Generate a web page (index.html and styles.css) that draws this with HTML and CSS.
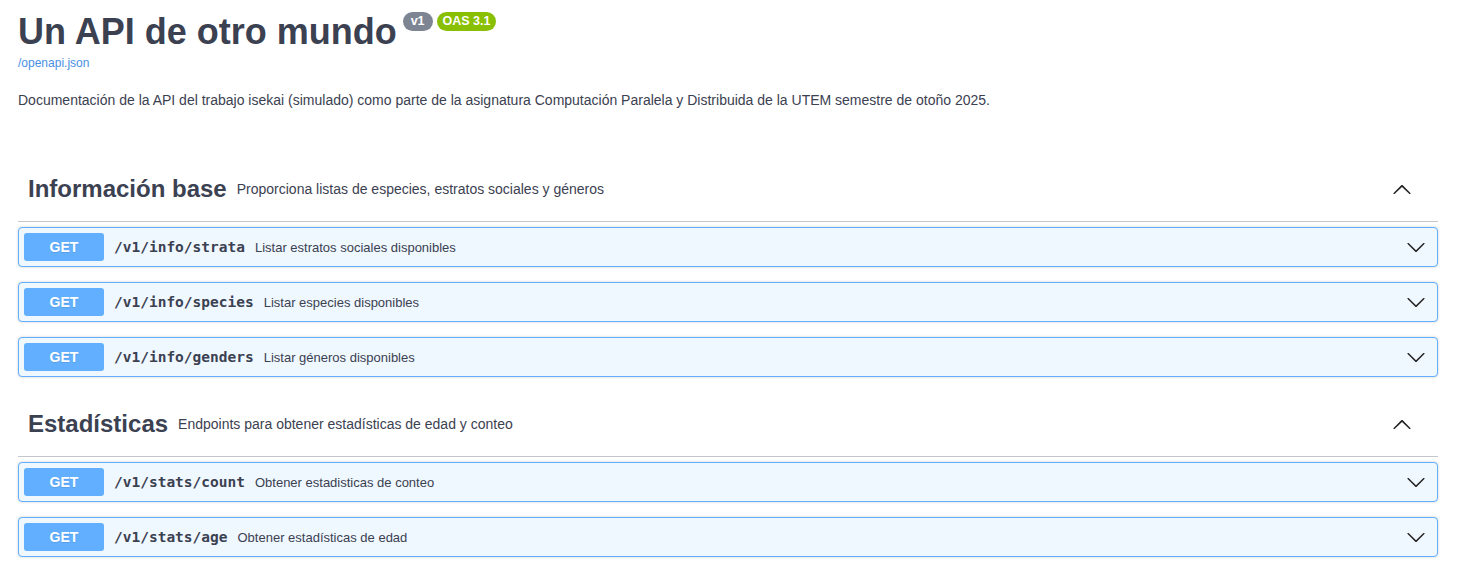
FILE: index.html
```html
<!DOCTYPE html>
<html lang="es">
<head>
<meta charset="utf-8">
<title>Un API de otro mundo</title>
<link rel="stylesheet" href="styles.css">
</head>
<body>
<div class="wrapper">
  <div class="info">
    <h2 class="title">Un API de otro mundo<span class="badge badge-version">v1</span><span class="badge badge-oas">OAS 3.1</span></h2>
    <a class="spec-link" href="#">/openapi.json</a>
    <p class="description">Documentación de la API del trabajo isekai (simulado) como parte de la asignatura Computación Paralela y Distribuida de la UTEM semestre de otoño 2025.</p>
  </div>

  <section class="tag-section">
    <div class="tag-header">
      <h3 class="tag-name">Información base</h3>
      <span class="tag-desc">Proporciona listas de especies, estratos sociales y géneros</span>
      <svg class="tag-arrow" width="20" height="20" viewBox="0 0 20 20"><path d="M17.418 14.908c.272.268.709.268.979 0s.271-.701 0-.969l-7.908-7.830c-.27-.268-.707-.268-.979 0l-7.908 7.830c-.27.268-.27.701 0 .969.271.268.709.268.979 0L10 7.993l7.418 6.915z"/></svg>
    </div>
    <div class="opblock">
      <span class="method">GET</span>
      <span class="path">/v1/info/strata</span>
      <span class="op-desc">Listar estratos sociales disponibles</span>
      <svg class="op-arrow" width="20" height="20" viewBox="0 0 20 20"><path d="M17.418 6.109c.272-.268.709-.268.979 0s.271.701 0 .969l-7.908 7.83c-.27.268-.707.268-.979 0l-7.908-7.83c-.27-.268-.27-.701 0-.969.271-.268.709-.268.979 0L10 13.25l7.418-7.141z"/></svg>
    </div>
    <div class="opblock">
      <span class="method">GET</span>
      <span class="path">/v1/info/species</span>
      <span class="op-desc">Listar especies disponibles</span>
      <svg class="op-arrow" width="20" height="20" viewBox="0 0 20 20"><path d="M17.418 6.109c.272-.268.709-.268.979 0s.271.701 0 .969l-7.908 7.83c-.27.268-.707.268-.979 0l-7.908-7.83c-.27-.268-.27-.701 0-.969.271-.268.709-.268.979 0L10 13.25l7.418-7.141z"/></svg>
    </div>
    <div class="opblock">
      <span class="method">GET</span>
      <span class="path">/v1/info/genders</span>
      <span class="op-desc">Listar géneros disponibles</span>
      <svg class="op-arrow" width="20" height="20" viewBox="0 0 20 20"><path d="M17.418 6.109c.272-.268.709-.268.979 0s.271.701 0 .969l-7.908 7.83c-.27.268-.707.268-.979 0l-7.908-7.83c-.27-.268-.27-.701 0-.969.271-.268.709-.268.979 0L10 13.25l7.418-7.141z"/></svg>
    </div>
  </section>

  <section class="tag-section">
    <div class="tag-header">
      <h3 class="tag-name">Estadísticas</h3>
      <span class="tag-desc">Endpoints para obtener estadísticas de edad y conteo</span>
      <svg class="tag-arrow" width="20" height="20" viewBox="0 0 20 20"><path d="M17.418 14.908c.272.268.709.268.979 0s.271-.701 0-.969l-7.908-7.830c-.27-.268-.707-.268-.979 0l-7.908 7.830c-.27.268-.27.701 0 .969.271.268.709.268.979 0L10 7.993l7.418 6.915z"/></svg>
    </div>
    <div class="opblock">
      <span class="method">GET</span>
      <span class="path">/v1/stats/count</span>
      <span class="op-desc">Obtener estadisticas de conteo</span>
      <svg class="op-arrow" width="20" height="20" viewBox="0 0 20 20"><path d="M17.418 6.109c.272-.268.709-.268.979 0s.271.701 0 .969l-7.908 7.83c-.27.268-.707.268-.979 0l-7.908-7.83c-.27-.268-.27-.701 0-.969.271-.268.709-.268.979 0L10 13.25l7.418-7.141z"/></svg>
    </div>
    <div class="opblock">
      <span class="method">GET</span>
      <span class="path">/v1/stats/age</span>
      <span class="op-desc">Obtener estadísticas de edad</span>
      <svg class="op-arrow" width="20" height="20" viewBox="0 0 20 20"><path d="M17.418 6.109c.272-.268.709-.268.979 0s.271.701 0 .969l-7.908 7.83c-.27.268-.707.268-.979 0l-7.908-7.830c-.27-.268-.27-.701 0-.969.271-.268.709-.268.979 0L10 13.25l7.418-7.141z"/></svg>
    </div>
  </section>
</div>
</body>
</html>
```

FILE: styles.css
```css
html, body {
  margin: 0;
  padding: 0;
  background: #fff;
}

body {
  font-family: "Liberation Sans", Arial, sans-serif;
  color: #3b4151;
}

.wrapper {
  padding: 0 28px 0 18px;
}

.info {
  padding-top: 11px;
  margin-bottom: 49px;
}

.title {
  margin: 0;
  font-size: 36px;
  line-height: 41px;
  font-weight: 700;
  color: #3b4151;
}

.badge {
  display: inline-block;
  vertical-align: top;
  margin-top: 1px;
  font-size: 12.5px;
  line-height: 15px;
  font-weight: 700;
  color: #fff;
  padding: 2px 6px;
  border-radius: 57px;
}

.badge-version {
  background: #7d8492;
  margin-left: 6px;
  padding: 2px 8px;
}

.badge-oas {
  background: #89bf04;
  margin-left: 4px;
}

.spec-link {
  display: block;
  margin-top: 4px;
  font-size: 12px;
  line-height: 14px;
  color: #4990e2;
  text-decoration: none;
}

.description {
  margin: 22px 0 0;
  font-size: 14px;
  line-height: 16px;
}

.tag-section {
  display: flex;
  flex-direction: column;
}

.tag-header {
  display: flex;
  align-items: center;
  height: 65px;
  box-sizing: border-box;
  padding: 0 26px 0 10px;
  border-bottom: 1px solid rgba(59, 65, 81, 0.3);
  margin-bottom: 5px;
}

.tag-name {
  margin: 0;
  font-size: 24px;
  font-weight: 700;
  color: #3b4151;
}

.tag-desc {
  flex: 1;
  padding: 0 10px;
  font-size: 14px;
  color: #3b4151;
}

.tag-arrow {
  flex: none;
  fill: #222;
}

.opblock {
  display: flex;
  align-items: center;
  padding: 5px 11px 5px 5px;
  margin-bottom: 15px;
  border: 1px solid #61affe;
  border-radius: 4px;
  background: #eff7ff;
  box-shadow: 0 0 3px rgba(0, 0, 0, 0.19);
}

.method {
  flex: none;
  min-width: 80px;
  padding: 6px 0;
  font-size: 14px;
  line-height: 16px;
  font-weight: 700;
  text-align: center;
  color: #fff;
  background: #61affe;
  border-radius: 3px;
  text-shadow: 0 1px 0 rgba(0, 0, 0, 0.1);
}

.path {
  padding: 0 10px;
  font-family: "DejaVu Sans Mono", "Liberation Mono", monospace;
  font-size: 14.5px;
  font-weight: 700;
  color: #3b4151;
}

.op-desc {
  flex: 1;
  font-size: 13px;
  color: #3b4151;
}

.op-arrow {
  flex: none;
  fill: #222;
}
```
